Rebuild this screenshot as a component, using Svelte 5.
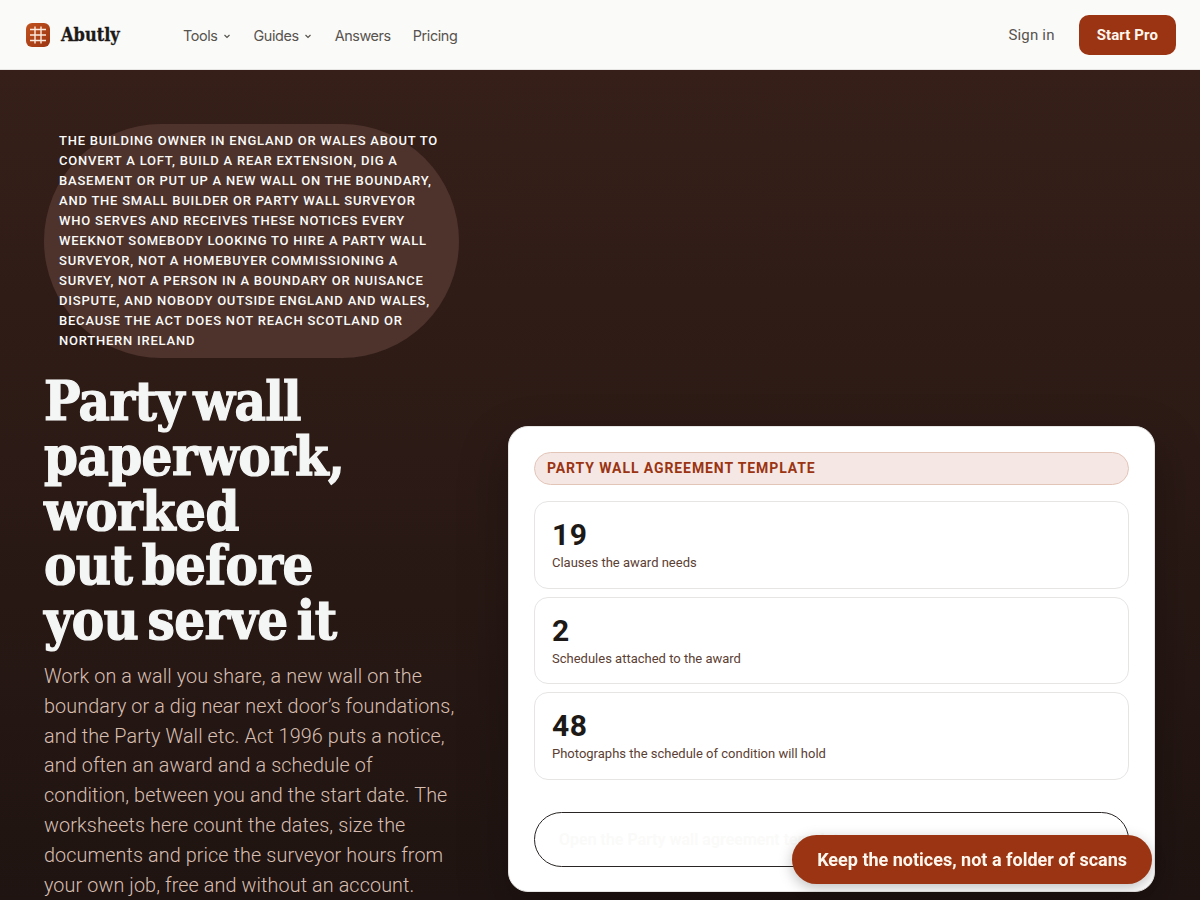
<script>
	const navLinks = [
		{ text: 'Tools', caret: true },
		{ text: 'Guides', caret: true },
		{ text: 'Answers' },
		{ text: 'Pricing' }
	];
	const stats = [
		{ value: '19', label: 'Clauses the award needs' },
		{ value: '2', label: 'Schedules attached to the award' },
		{ value: '48', label: 'Photographs the schedule of condition will hold' }
	];
</script>

<div class="page">
	<header class="topbar">
		<a class="brand" href="/">
			<svg class="logo" viewBox="0 0 24 24" aria-hidden="true">
				<defs>
					<linearGradient id="logo-fill" x1="0" y1="0" x2="1" y2="1">
						<stop offset="0" stop-color="#c2531f" />
						<stop offset="1" stop-color="#9a3412" />
					</linearGradient>
				</defs>
				<rect width="24" height="24" rx="6" fill="url(#logo-fill)" />
				<path d="M9 3.5v17M15 3.5v17M4 6.5h16M4 12h16M4 17.5h16" fill="none" stroke="#fbeadd" stroke-width="1.4" />
			</svg>
			<span class="brand-name">Abutly</span>
		</a>
		<nav class="nav">
			{#each navLinks as link}
				<a href="/">
					{link.text}
					{#if link.caret}
						<svg class="caret" viewBox="0 0 10 10" aria-hidden="true">
							<path d="M2.5 4l2.5 2.5L7.5 4" fill="none" stroke="currentColor" stroke-width="1.2" />
						</svg>
					{/if}
				</a>
			{/each}
		</nav>
		<div class="actions">
			<a class="signin" href="/">Sign in</a>
			<a class="start" href="/">Start Pro</a>
		</div>
	</header>

	<main class="hero">
		<div class="copy">
			<p class="audience">
				The building owner in England or Wales about to convert a loft, build a rear extension, dig a basement or put up a new wall on the boundary, and the small builder or party wall surveyor who serves and receives these notices every weekNot somebody looking to hire a party wall surveyor, not a homebuyer commissioning a survey, not a person in a boundary or nuisance dispute, and nobody outside England and Wales, because the Act does not reach Scotland or Northern Ireland
			</p>
			<h1>Party wall paperwork, worked<br />out before<br />you serve it</h1>
			<p class="lead">
				Work on a wall you share, a new wall on the boundary or a dig near next door’s foundations, and the Party Wall etc. Act 1996 puts a notice, and often an award and a schedule of condition, between you and the start date. The worksheets here count the dates, size the documents and price the surveyor hours from your own job, free and without an account.
			</p>
		</div>

		<section class="card">
			<div class="tag">Party wall agreement template</div>
			<div class="stats">
				{#each stats as stat}
					<div class="stat">
						<strong>{stat.value}</strong>
						<span>{stat.label}</span>
					</div>
				{/each}
			</div>
			<a class="open" href="/">Open the Party wall agreement template</a>
		</section>
	</main>

	<a class="toast" href="/">Keep the notices, not a folder of scans</a>
</div>

<style>
	:global(body) {
		background: #1f1411;
	}
	.page {
		height: 900px;
		overflow: hidden;
		font-family: Roboto, 'Liberation Sans', sans-serif;
	}
	a {
		text-decoration: none;
		color: inherit;
	}
	.topbar {
		height: 69px;
		display: flex;
		align-items: center;
		padding: 0 24px 0 26px;
		background: #fafaf9;
		border-bottom: 1px solid #e7e5e4;
	}
	.brand {
		display: flex;
		align-items: center;
		gap: 11px;
		width: 157px;
	}
	.logo {
		width: 24px;
		height: 24px;
	}
	.brand-name {
		font-family: 'DejaVu Serif Condensed', 'DejaVu Serif', serif;
		font-weight: 700;
		font-size: 18px;
		color: #1c1917;
		-webkit-text-stroke: 0.3px #1c1917;
	}
	.nav {
		display: flex;
		gap: 22px;
		font-family: Inter, sans-serif;
		font-size: 14.4px;
		letter-spacing: -0.4px;
		color: #57534e;
		padding-top: 2px;
	}
	.nav a {
		display: flex;
		align-items: center;
		gap: 4px;
	}
	.caret {
		width: 10px;
		height: 10px;
	}
	.actions {
		margin-left: auto;
		display: flex;
		align-items: center;
		gap: 24px;
	}
	.signin {
		font-size: 15px;
		font-weight: 400;
		color: #57534e;
		letter-spacing: 0.2px;
	}
	.start {
		background: #9a3412;
		color: #fff7ed;
		font-size: 15px;
		font-weight: 700;
		padding: 0 18px;
		height: 40px;
		line-height: 40px;
		border-radius: 10px;
		letter-spacing: 0.1px;
	}
	.hero {
		height: 831px;
		box-sizing: border-box;
		padding: 54px 45px 9px 44px;
		display: grid;
		grid-template-columns: 415px 1fr;
		grid-template-rows: minmax(0, 1fr);
		gap: 49px;
		background: linear-gradient(180deg, #361f19, #1f1411);
	}
	.audience {
		margin: 0;
		padding: 7px 15px;
		border-radius: 999px;
		background: #4d332b;
		color: #fafaf9;
		font-size: 13px;
		font-weight: 500;
		line-height: 20px;
		letter-spacing: 0.06em;
		text-transform: uppercase;
	}
	h1 {
		margin: 16px 0 0;
		font-family: 'DejaVu Serif Condensed', 'DejaVu Serif', serif;
		font-size: 54px;
		font-weight: 700;
		line-height: 54.8px;
		letter-spacing: -0.6px;
		word-spacing: -7px;
		color: #f4f6f5;
		-webkit-text-stroke: 1.2px #f4f6f5;
	}
	.lead {
		margin: 14px 0 0;
		font-size: 19.8px;
		font-weight: 300;
		line-height: 29.8px;
		letter-spacing: 0.1px;
		color: #d8bfb2;
	}
	.card {
		align-self: end;
		box-sizing: border-box;
		height: 466px;
		padding: 25px;
		background: #fff;
		border: 1px solid #e7e5e4;
		border-radius: 20px;
		box-shadow: 0 20px 50px rgba(0, 0, 0, 0.25);
	}
	.tag {
		height: 33px;
		box-sizing: border-box;
		padding: 0 12px;
		line-height: 31px;
		border: 1px solid #e3c5b8;
		border-radius: 999px;
		background: #f5e8e4;
		color: #9a3412;
		font-size: 14px;
		font-weight: 700;
		letter-spacing: 0.065em;
		text-transform: uppercase;
	}
	.stats {
		margin-top: 16px;
		display: flex;
		flex-direction: column;
		gap: 8px;
	}
	.stat {
		height: 87.6px;
		box-sizing: border-box;
		padding: 15px 17px;
		border: 1px solid #e7e5e4;
		border-radius: 14px;
	}
	.stat strong {
		display: block;
		font-size: 30px;
		line-height: 36px;
		font-weight: 700;
		color: #1c1917;
		letter-spacing: 0.02em;
	}
	.stat span {
		display: block;
		font-size: 13px;
		line-height: 20px;
		color: #5c4033;
	}
	.open {
		display: block;
		margin-top: 32px;
		height: 55px;
		box-sizing: border-box;
		padding: 0 24px;
		line-height: 53px;
		border: 1px solid #292524;
		border-radius: 999px;
		color: #fafaf9;
		font-size: 16px;
		font-weight: 600;
	}
	.toast {
		position: fixed;
		right: 48px;
		bottom: 16px;
		height: 49px;
		line-height: 49px;
		padding: 0 25px;
		border-radius: 999px;
		background: #9a3412;
		color: #fff7ed;
		font-size: 18px;
		font-weight: 700;
		box-shadow: 0 4px 14px rgba(0, 0, 0, 0.25);
	}
</style>
